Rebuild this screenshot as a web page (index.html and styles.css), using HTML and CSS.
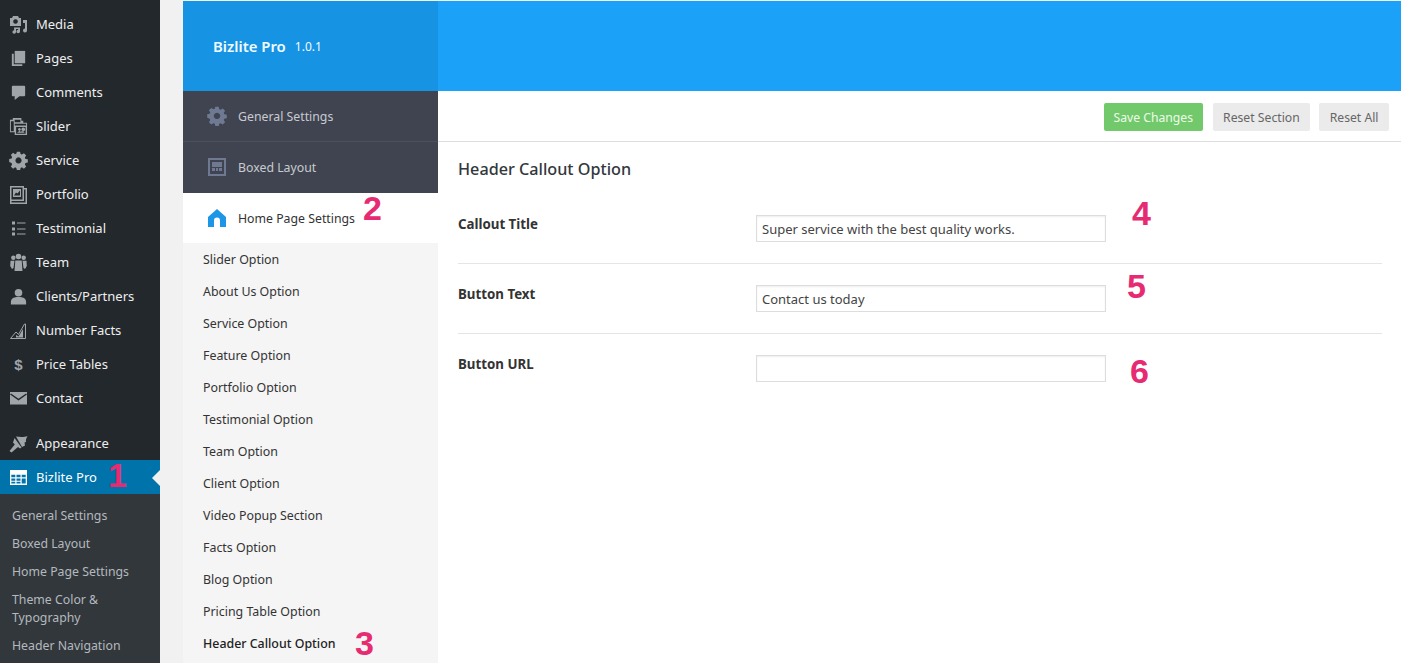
FILE: index.html
```html
<!DOCTYPE html>
<html lang="en">
<head>
<meta charset="utf-8">
<title>Bizlite Pro</title>
<link rel="stylesheet" href="styles.css">
</head>
<body>
<div class="page">
  <aside class="admin">
    <ul class="menu">
      <li class="item"><svg class="ico" viewBox="0 0 19 19"><path fill-rule="evenodd" d="M1 3h2l1-2h5l1 2h2v8H1zm5.500 1.200a2.300 2.300 0 1 0 .01 0zM13 5h5v10.500a2 2 0 1 1-2-2V8h-2v-3zM5 12.500h6v4a1.800 1.800 0 1 1-1.800-1.800V14H7v3a1.800 1.800 0 1 1-1.800-1.800z"/></svg><span>Media</span></li>
      <li class="item"><svg class="ico" viewBox="0 0 20 20"><path d="M6 2h11v13H6z"/><path d="M3 5h2v11h9v2H3z"/></svg><span>Pages</span></li>
      <li class="item"><svg class="ico" viewBox="0 0 20 20"><path d="M4 3h12a1 1 0 0 1 1 1v9a1 1 0 0 1-1 1h-5l-5 4v-4H4a1 1 0 0 1-1-1V4a1 1 0 0 1 1-1z"/></svg><span>Comments</span></li>
      <li class="item"><svg class="ico" viewBox="0 0 20 20"><path fill-rule="evenodd" d="M1 3h3V1h9v3h2v2h4v13H6v-3H1zm1 1.500V15h3V4.500zM6 7v2h12V7zm0-4v2.500h6V3zM7.500 10.500V17.500h10v-7zM11 11.500a1.500 1.500 0 1 1-.01 0zM15 11a2 2 0 1 1-.01 0zM8.500 16.500l2.500-2 1.500 1 2-1 2 2z"/></svg><span>Slider</span></li>
      <li class="item"><svg class="ico" viewBox="0 0 20 20"><path fill-rule="evenodd" d="M8.300 1h3.400l.5 2.500 1.400.6 2.100-1.400 2.400 2.400-1.400 2.100.6 1.400 2.500.5v3.400l-2.500.5-.6 1.400 1.400 2.100-2.400 2.400-2.100-1.400-1.400.6-.5 2.500H8.300l-.5-2.500-1.400-.6-2.100 1.400-2.400-2.400 1.400-2.100-.6-1.400L.2 12V8.600l2.500-.5.6-1.400-1.400-2.100 2.400-2.400 2.100 1.400 1.400-.6zM10 7a3.200 3.200 0 1 0 .01 0z" transform="translate(0 -.3)"/></svg><span>Service</span></li>
      <li class="item"><svg class="ico" viewBox="0 0 19 19"><path fill-rule="evenodd" d="M1 1h14v2h3v16H1zm1.500 1.500v12h11v-12zM15 4.500V16H2.500v1.500h14v-13zM4 4h8v8H4zm1 6.500h6V5.500L8.500 8.500 7 7.500z"/></svg><span>Portfolio</span></li>
      <li class="item"><svg class="ico" viewBox="0 0 19 19"><path d="M3 2.500h3v3H3zM8 3.500h8.500v1H8zM3 8.500h3v3H3zM8 9.500h8.500v1H8zM3 13.500h3v3H3zM8 14.500h8.500v1H8z"/></svg><span>Testimonial</span></li>
      <li class="item"><svg class="ico" viewBox="0 0 19 19"><circle cx="9.500" cy="3.500" r="2.800"/><circle cx="4.300" cy="4.800" r="2.200"/><circle cx="14.700" cy="4.800" r="2.200"/><path d="M6.300 7.500h6.400l.8 10.500h-8zM1.500 7.800h4L4.500 15l-1.500 1-1.800-3zM17.500 7.800h-4l1 7.200 1.500 1 1.800-3z"/></svg><span>Team</span></li>
      <li class="item"><svg class="ico" viewBox="0 0 20 20"><circle cx="10" cy="6" r="4"/><path d="M2 16c0-4 3-5 6-5.500h4c3 .5 6 1.500 6 5.500v2.500H2z"/></svg><span>Clients/Partners</span></li>
      <li class="item"><svg class="ico" viewBox="0 0 19 19"><path d="M1.500 17.500L7 11l2.500 2.500L15.500 3 16.500 3V17.500z" fill="none" stroke="currentColor" stroke-width="1"/><path d="M7 14l2.500 1.500L14 8v8.500H7z"/></svg><span>Number Facts</span></li>
      <li class="item"><span class="ico dollar">$</span><span>Price Tables</span></li>
      <li class="item"><svg class="ico" viewBox="0 0 19 19"><path d="M1 3h17v12.500H1z"/><path d="M1.500 5l8 5.500 8-5.500" fill="none" stroke="#23282d" stroke-width="1.500"/></svg><span>Contact</span></li>
    </ul>
    <ul class="menu second">
      <li class="item"><svg class="ico" viewBox="0 0 19 19"><path d="M7 2.500c3 .5 8 1 11.500-.5-1 2-2 4-1.500 6l-1.500.5.500 3L13 13zM5.500 4l7 9.500-1.500 1-2-1.500L2.500 18.500.500 17 5.800 10.500 4 8.500z"/></svg><span>Appearance</span></li>
      <li class="item current"><svg class="ico" viewBox="0 0 19 19"><path fill-rule="evenodd" d="M1 2h17v15H1zm1.300 4.800v2.400h4V6.800zm5.200 0v2.400h4V6.800zm5.200 0v2.400h4V6.800zm-10.400 3.600v2.400h4v-2.400zm5.200 0v2.400h4v-2.400zm5.200 0v5.200h4v-5.200zm-10.400 3.400v1.800h4v-1.800zm5.200 0v1.800h4v-1.800z"/></svg><span>Bizlite Pro</span></li>
    </ul>
    <ul class="sub">
      <li>General Settings</li>
      <li>Boxed Layout</li>
      <li>Home Page Settings</li>
      <li>Theme Color &amp; Typography</li>
      <li>Header Navigation</li>
    </ul>
  </aside>

  <div class="panel">
    <header class="banner">
      <div class="brand"><strong>Bizlite Pro</strong><small>1.0.1</small></div>
    </header>
    <div class="body">
      <nav class="nav">
        <a class="tab"><svg class="tab-ico" viewBox="0 0 20 20"><path fill-rule="evenodd" d="M8.300 1h3.400l.5 2.500 1.400.6 2.100-1.400 2.400 2.400-1.400 2.100.6 1.400 2.500.5v3.400l-2.500.5-.6 1.400 1.400 2.100-2.400 2.400-2.100-1.400-1.400.6-.5 2.500H8.300l-.5-2.500-1.400-.6-2.100 1.400-2.400-2.400 1.400-2.100-.6-1.400L.2 12V8.600l2.500-.5.6-1.400-1.400-2.100 2.400-2.400 2.100 1.400 1.400-.6zM10 7a3.200 3.200 0 1 0 .01 0z" transform="translate(0 -.3)"/></svg>General Settings</a>
        <a class="tab last"><svg class="tab-ico" viewBox="0 0 20 20"><path fill-rule="evenodd" d="M1 1h18v18H1zm2 2v14h14V3zm2 2h10v5H5zm0 6h3v3H5zm4 0h2v3H9zm3 0h3v3h-3z"/></svg>Boxed Layout</a>
        <a class="tab active"><svg class="tab-ico" viewBox="0 0 20 20"><path d="M10 1l9 8v10h-6v-6.500a3 3 0 0 0-6 0V19H1V9z"/></svg>Home Page Settings</a>
        <ul class="options">
          <li>Slider Option</li>
          <li>About Us Option</li>
          <li>Service Option</li>
          <li>Feature Option</li>
          <li>Portfolio Option</li>
          <li>Testimonial Option</li>
          <li>Team Option</li>
          <li>Client Option</li>
          <li>Video Popup Section</li>
          <li>Facts Option</li>
          <li>Blog Option</li>
          <li>Pricing Table Option</li>
          <li class="on">Header Callout Option</li>
        </ul>
      </nav>
      <main class="main">
        <div class="toolbar">
          <button class="btn save">Save Changes</button>
          <button class="btn">Reset Section</button>
          <button class="btn">Reset All</button>
        </div>
        <section class="form">
          <h2>Header Callout Option</h2>
          <div class="row"><label>Callout Title</label><input type="text" value="Super service with the best quality works."></div>
          <div class="row"><label>Button Text</label><input type="text" value="Contact us today"></div>
          <div class="row"><label>Button URL</label><input type="text" value=""></div>
        </section>
      </main>
    </div>
  </div>

  <span class="mark m1">1</span>
  <span class="mark m2">2</span>
  <span class="mark m3">3</span>
  <span class="mark m4">4</span>
  <span class="mark m5">5</span>
  <span class="mark m6">6</span>
</div>
</body>
</html>
```
FILE: styles.css
```css
* { box-sizing: border-box; }
html, body { margin: 0; padding: 0; height: 663px; overflow: hidden; }
body { font-family: "Noto Sans", "Open Sans", sans-serif; font-size: 13px; background: #f1f1f1; color: #333; }
ul { list-style: none; margin: 0; padding: 0; }
.page { position: relative; display: flex; height: 663px; width: 1401px; overflow: hidden; }

.admin { width: 160px; flex: none; background: #23282d; padding-top: 7px; height: 663px; }
.item { height: 34px; display: flex; align-items: center; color: #eee; font-size: 13px; padding-left: 9px; gap: 8px; position: relative; }
.ico { width: 19px; height: 19px; flex: none; fill: #a0a5aa; color: #a0a5aa; }
.dollar { font: 700 15px/19px "Liberation Sans", sans-serif; text-align: center; }
.second { margin-top: 11px; }
.current { background: #0073aa; color: #fff; }
.current .ico { fill: #fff; }
.current::after { content: ""; position: absolute; right: 0; top: 10px; border: 8px solid transparent; border-right-color: #f1f1f1; border-left-width: 0; }
.sub { background: #32373c; padding: 7px 0 8px; color: #b4b9be; }
.sub li { padding: 6px 12px 4px; line-height: 18px; font-size: 12.300px; }

.panel { margin-left: 23px; flex: 1; min-width: 0; display: flex; flex-direction: column; padding-top: 1px; }
.banner { height: 90px; background: #1ba1f7; flex: none; }
.brand { width: 255px; height: 90px; background: #1793e4; color: #f0fbff; padding-left: 30px; display: flex; align-items: center; gap: 9px; }
.brand strong { font-size: 14.900px; font-weight: 600; }
.brand small { font-size: 12px; padding-top: 1px; }
.body { flex: 1; display: flex; min-height: 0; background: #fff; }

.nav { width: 255px; flex: none; background: #f5f5f5; }
.tab { display: flex; align-items: center; height: 51px; padding-left: 24px; gap: 11px; background: #3f4450; color: #c8cad0; border-bottom: 1px solid #4c515c; font-size: 12.300px; }
.tab.last { border-bottom: 0; padding-bottom: 1px; }
.tab-ico { width: 20px; height: 20px; fill: #6f7a92; flex: none; }
.tab.active { background: #fff; color: #333; height: 50px; border: 0; }
.tab.active .tab-ico { fill: #1e96e8; }
.options li { height: 32px; padding: 1px 0 0 20px; line-height: 31px; font-size: 12.400px; color: #333; }
.options .on { font-weight: 500; color: #222; }

.main { flex: 1; min-width: 0; }
.toolbar { height: 51px; border-bottom: 1px solid #ddd; display: flex; justify-content: flex-end; align-items: flex-start; padding: 12px 12px 0 0; gap: 9px; }
.btn { height: 28px; padding: 0 10.500px; border: 0; border-radius: 2px; background: #ebebeb; color: #666; font: 12.200px "Noto Sans", sans-serif; }
.btn.save { background: #71c96c; color: #eefbe9; margin-right: 1px; padding: 0 9.500px; }
.form { padding: 0 19px 0 20px; }
h2 { margin: 0; height: 52px; padding-top: 16px; font-size: 16.200px; line-height: 22px; font-weight: 500; color: #32373c; }
.row { display: flex; height: 70px; padding-top: 21px; border-bottom: 1px solid #e5e5e5; align-items: flex-start; }
.row:last-child { border-bottom: 0; }
label { width: 298px; flex: none; font-weight: 700; font-size: 13.300px; color: #333; line-height: 18px; }
input { width: 350px; height: 27px; border: 1px solid #ddd; box-shadow: inset 0 1px 2px rgba(0,0,0,.07); padding: 0 5px; font: 13px "Noto Sans", sans-serif; color: #444; background: #fff; outline: 0; border-radius: 0; }

.mark { position: absolute; font: 700 34px/1 "Liberation Sans", Arial, sans-serif; color: #e62b72; }
.m1 { left: 108px; top: 458px; }
.m2 { left: 363px; top: 191px; }
.m3 { left: 355px; top: 626px; }
.m4 { left: 1132px; top: 196px; }
.m5 { left: 1127px; top: 269px; }
.m6 { left: 1130px; top: 354px; }
```
